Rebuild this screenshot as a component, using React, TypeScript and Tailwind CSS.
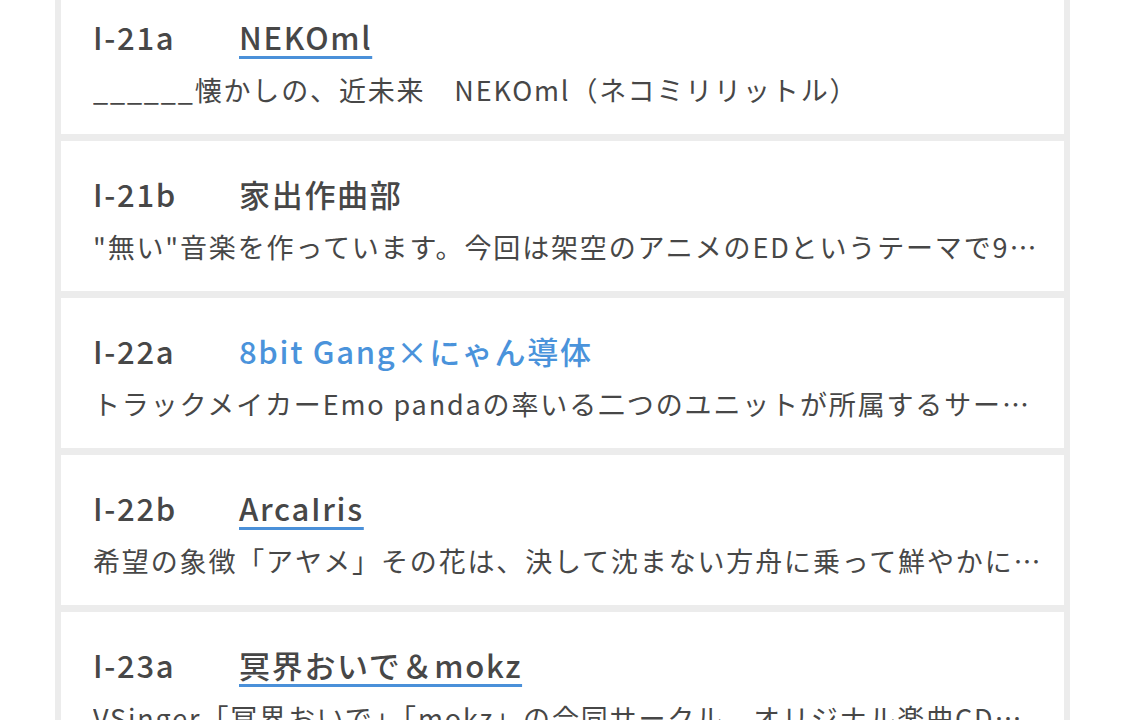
import React from 'react';

type Circle = { code: string; name: string; desc: string; link?: boolean; active?: boolean };

const circles: Circle[] = [
  { code: 'I-21a', name: 'NEKOml', desc: '______懐かしの、近未来　NEKOml（ネコミリリットル）', link: true },
  { code: 'I-21b', name: '家出作曲部', desc: '"無い"音楽を作っています。今回は架空のアニメのEDというテーマで9曲入りのアルバムを頒布します。' },
  { code: 'I-22a', name: '8bit Gang×にゃん導体', desc: 'トラックメイカーEmo pandaの率いる二つのユニットが所属するサークルです。', active: true },
  { code: 'I-22b', name: 'ArcaIris', desc: '希望の象徴「アヤメ」その花は、決して沈まない方舟に乗って鮮やかに咲き誇る。', link: true },
  { code: 'I-23a', name: '冥界おいで＆mokz', desc: 'VSinger「冥界おいで」「mokz」の合同サークル。オリジナル楽曲CDを頒布します。', link: true },
];

export default function App() {
  return (
    <div
      className="h-[720px] w-[1125px] overflow-hidden bg-white text-[#474747]"
      style={{ fontFamily: '"Noto Sans CJK JP", "Noto Sans", sans-serif' }}
    >
      <div className="mx-auto -mt-[16px] flex w-[1015px] flex-col gap-[7px] bg-[#ececec] px-[6px] pb-[6px]">
        {circles.map((c) => (
          <div key={c.code} className="h-[150px] bg-white pl-[32px] pr-[14px] pt-[30px]">
            <div className="flex h-[46px] items-center text-[31px] font-medium leading-[46px] tracking-[1.7px]">
              <span className="w-[146px] shrink-0">{c.code}</span>
              <span
                className={
                  c.active
                    ? 'text-[#4a93db]'
                    : c.link
                      ? 'underline decoration-[#4a90d9] decoration-[3px] underline-offset-[6px]'
                      : ''
                }
              >
                {c.name}
              </span>
            </div>
            <div className="mt-[10px] truncate text-[27px] leading-[40px] tracking-[1.85px]">{c.desc}</div>
          </div>
        ))}
      </div>
    </div>
  );
}
